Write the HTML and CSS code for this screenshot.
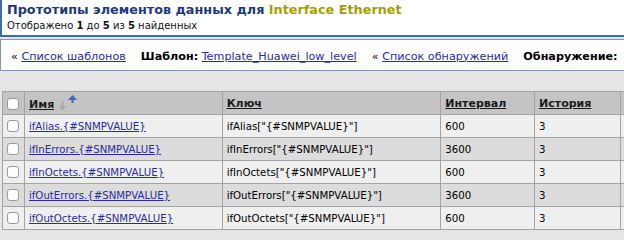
FILE: index.html
```html
<!DOCTYPE html>
<html lang="ru">
	<head>
		<meta charset="UTF-8"/>
		<title>Прототипы элементов данных</title>
		<link rel="stylesheet" href="styles.css">
	</head>
	<body>
	  <div class="header">
		<h1>Прототипы элементов данных для <span class="host">Interface Ethernet</span></h1>
		<div class="found">Отображено <b>1</b> до <b>5</b> из <b>5</b> найденных</div>
	  </div>
	  <div class="links">
		<span class="nav">&laquo; <a href="#">Список шаблонов</a></span>
		<span class="nav"><b>Шаблон:</b> <a href="#">Template_Huawei_low_level</a></span>
		<span class="nav">&laquo; <a href="#">Список обнаружений</a></span>
		<span class="nav"><b>Обнаружение:</b></span>
	  </div>
	  <table class="items">
		<colgroup>
		  <col class="c-check"><col class="c-name"><col class="c-key"><col class="c-int"><col class="c-hist"><col class="c-trend">
		</colgroup>
		<thead>
		  <tr>
			<th><span class="box"></span></th>
			<th><a href="#" class="sort">Имя</a><svg class="arrows" width="20" height="18" viewBox="0 0 20 18">
				<path d="M3.5 7h2v5H8l-3.5 5L1 12h2.5z" fill="#a9a9a9"/>
				<path d="M13.5 9V6H10l4.5-5L19 6h-3.5v3z" fill="#3a6bb0"/>
			  </svg></th>
			<th><a href="#" class="sort">Ключ</a></th>
			<th><a href="#" class="sort">Интервал</a></th>
			<th><a href="#" class="sort">История</a></th>
			<th></th>
		  </tr>
		</thead>
		<tbody>
		  <tr>
			<td><span class="box"></span></td>
			<td><a href="#">ifAlias.{#SNMPVALUE}</a></td>
			<td>ifAlias["{#SNMPVALUE}"]</td>
			<td>600</td><td>3</td><td></td>
		  </tr>
		  <tr class="odd">
			<td><span class="box"></span></td>
			<td><a href="#">ifInErrors.{#SNMPVALUE}</a></td>
			<td>ifInErrors["{#SNMPVALUE}"]</td>
			<td>3600</td><td>3</td><td></td>
		  </tr>
		  <tr>
			<td><span class="box"></span></td>
			<td><a href="#">ifInOctets.{#SNMPVALUE}</a></td>
			<td>ifInOctets["{#SNMPVALUE}"]</td>
			<td>600</td><td>3</td><td></td>
		  </tr>
		  <tr class="odd">
			<td><span class="box"></span></td>
			<td><a href="#">ifOutErrors.{#SNMPVALUE}</a></td>
			<td>ifOutErrors["{#SNMPVALUE}"]</td>
			<td>3600</td><td>3</td><td></td>
		  </tr>
		  <tr>
			<td><span class="box"></span></td>
			<td><a href="#">ifOutOctets.{#SNMPVALUE}</a></td>
			<td>ifOutOctets["{#SNMPVALUE}"]</td>
			<td>600</td><td>3</td><td></td>
		  </tr>
		</tbody>
	  </table>
	</body>
</html>
```

FILE: styles.css
```css
* {
  box-sizing: border-box;
}
body {
  margin: 0;
  width: 760px;
  background: #e5e5e5;
  font-family: "DejaVu Sans", Verdana, sans-serif;
  font-size: 11px;
  color: #000;
}
a {
  color: #2b2b9e;
}
.header {
  height: 37px;
  background: #fff;
  border-left: 2px solid #3b6ea8;
  border-bottom: 2px solid #3b6ea8;
  padding: 2px 5px 0 5px;
}
h1 {
  margin: 0;
  font-size: 12.8px;
  font-weight: bold;
  color: #1d3a78;
  line-height: 16px;
}
.host {
  color: #a59f00;
}
.found {
  margin-top: 1px;
  font-size: 10px;
  line-height: 14px;
  color: #111;
}
.links {
  display: flex;
  align-items: center;
  height: 32px;
  margin-top: 2px;
  background: #fff;
  border: 1px solid #7d98b8;
  padding: 2px 0 0 10px;
  font-size: 11.2px;
  white-space: nowrap;
}
.nav {
  margin-right: 15px;
}
.items {
  margin: 20px 0 0 2px;
  border-collapse: collapse;
  table-layout: fixed;
}
.c-check { width: 22px; }
.c-name { width: 198px; }
.c-key { width: 219px; }
.c-int { width: 94px; }
.c-hist { width: 86px; }
.c-trend { width: 140px; }
th, td {
  border: 1px solid #a3a3a3;
  padding: 0 4px;
  text-align: left;
  white-space: nowrap;
  overflow: hidden;
}
th {
  height: 23px;
  background: #c4c4c4;
  font-weight: bold;
}
td {
  height: 23px;
  background: #efefef;
  font-size: 10.2px;
}
tr.odd td {
  background: #dcdcdc;
}
.sort {
  color: #1a1a1a;
}
.arrows {
  vertical-align: -4px;
  margin-left: 4px;
}
.box {
  display: inline-block;
  width: 12px;
  height: 12px;
  border: 1px solid #9a9a9a;
  border-radius: 3px;
  background: #fff;
  vertical-align: middle;
}
th:first-child, td:first-child {
  padding: 0 0 0 4px;
}
```
